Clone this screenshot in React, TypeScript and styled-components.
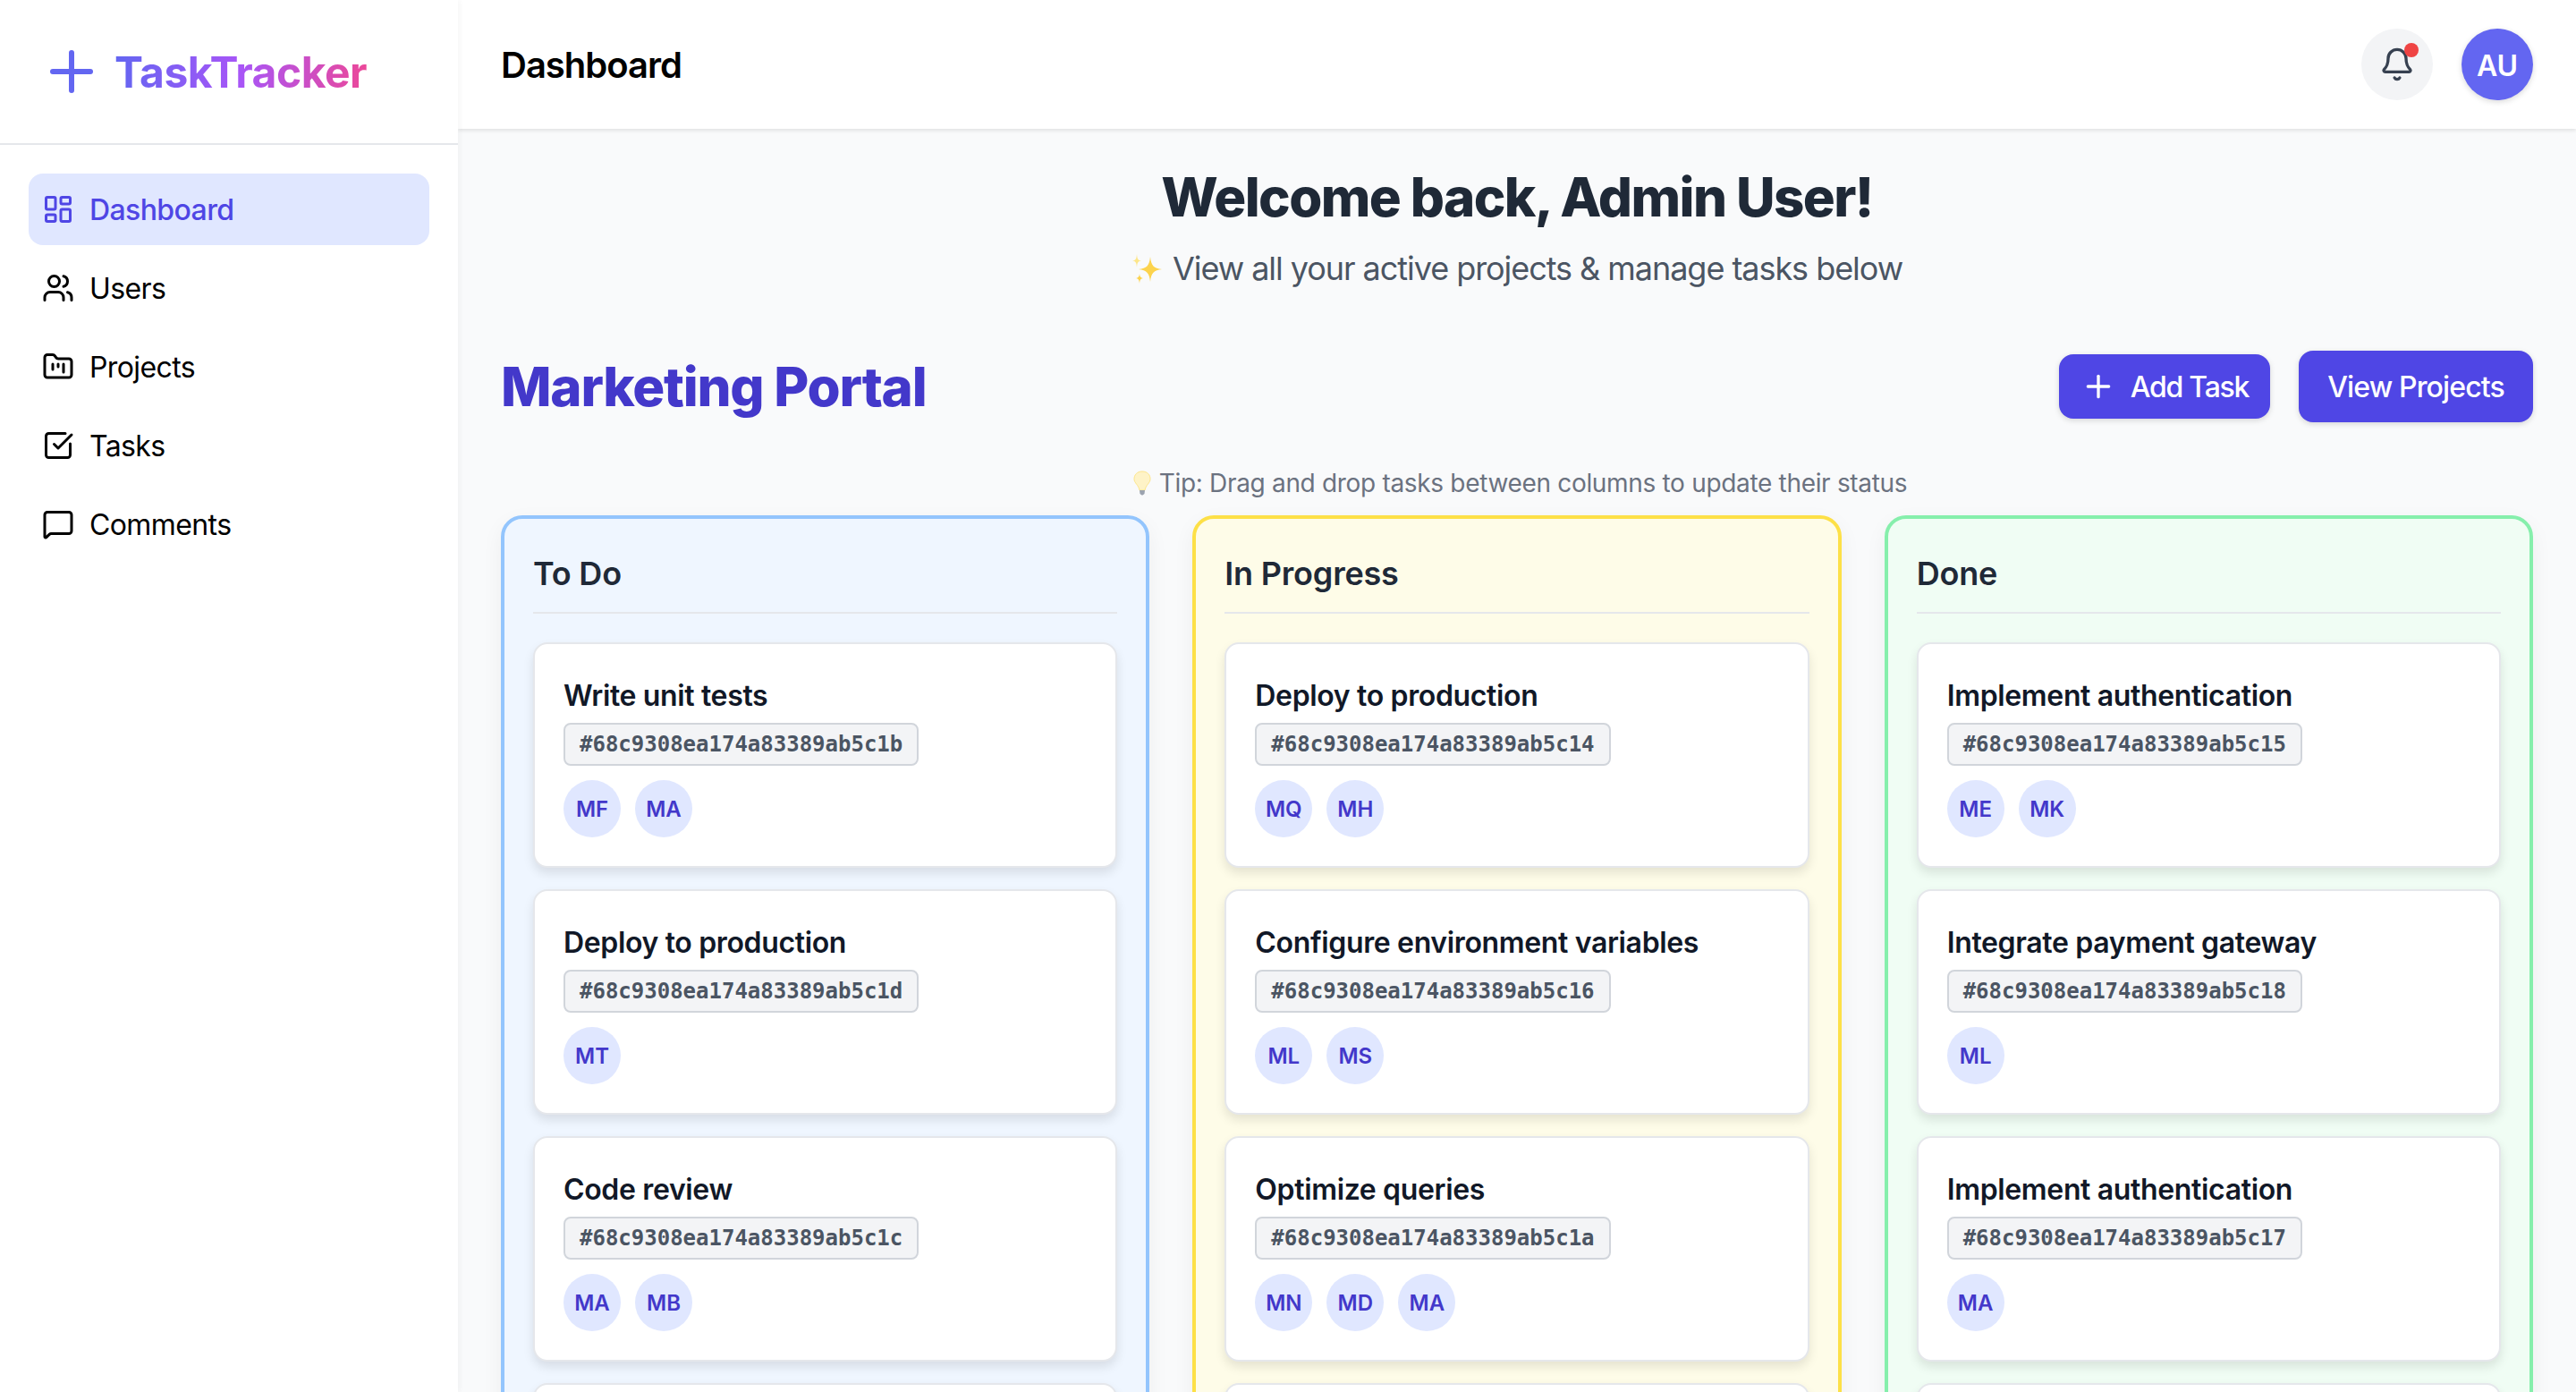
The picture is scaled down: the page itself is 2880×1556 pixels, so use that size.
import styled, { createGlobalStyle } from "styled-components";
import { Bell, CheckSquare, FolderKanban, LayoutDashboard, MessageSquare, Plus, Users } from "lucide-react";
import type { LucideIcon } from "lucide-react";

/*--------------------------
    Data
--------------------------*/
type NavEntry = { label: string; icon: LucideIcon; active?: boolean };
type Task = { title: string; id: string; people: string[] };
type Tone = "blue" | "yellow" | "green";
type Column = { title: string; tone: Tone; tasks: Task[] };

const NAV: NavEntry[] = [
    { label: "Dashboard", icon: LayoutDashboard, active: true },
    { label: "Users", icon: Users },
    { label: "Projects", icon: FolderKanban },
    { label: "Tasks", icon: CheckSquare },
    { label: "Comments", icon: MessageSquare },
];

const COLUMNS: Column[] = [
    {
        title: "To Do",
        tone: "blue",
        tasks: [
            { title: "Write unit tests", id: "#68c9308ea174a83389ab5c1b", people: ["MF", "MA"] },
            { title: "Deploy to production", id: "#68c9308ea174a83389ab5c1d", people: ["MT"] },
            { title: "Code review", id: "#68c9308ea174a83389ab5c1c", people: ["MA", "MB"] },
        ],
    },
    {
        title: "In Progress",
        tone: "yellow",
        tasks: [
            { title: "Deploy to production", id: "#68c9308ea174a83389ab5c14", people: ["MQ", "MH"] },
            { title: "Configure environment variables", id: "#68c9308ea174a83389ab5c16", people: ["ML", "MS"] },
            { title: "Optimize queries", id: "#68c9308ea174a83389ab5c1a", people: ["MN", "MD", "MA"] },
        ],
    },
    {
        title: "Done",
        tone: "green",
        tasks: [
            { title: "Implement authentication", id: "#68c9308ea174a83389ab5c15", people: ["ME", "MK"] },
            { title: "Integrate payment gateway", id: "#68c9308ea174a83389ab5c18", people: ["ML"] },
            { title: "Implement authentication", id: "#68c9308ea174a83389ab5c17", people: ["MA"] },
        ],
    },
];

const TONES: Record<Tone, { border: string; background: string }> = {
    blue: { border: "#93c5fd", background: "#eff6ff" },
    yellow: { border: "#fde047", background: "#fefce8" },
    green: { border: "#86efac", background: "#f0fdf4" },
};

/*--------------------------
    Styled
--------------------------*/
const GlobalReset = createGlobalStyle`
    * {
        box-sizing: border-box;
    }
    html,
    body {
        margin: 0;
        height: 100%;
        overflow: hidden;
    }
    body {
        font-family: Inter, "Liberation Sans", sans-serif;
        color: #000;
        background: #f9fafb;
    }
`;
const Shell = styled.div`
    display: flex;
    height: 100vh;
    overflow: hidden;
`;
const Sidebar = styled.aside`
    flex: 0 0 512px;
    position: relative;
    z-index: 2;
    background: #fff;
    box-shadow: 2px 0 6px rgba(0, 0, 0, 0.04);
`;
const Brand = styled.div`
    display: flex;
    align-items: center;
    gap: 12px;
    height: 162px;
    padding: 0 44px;
    border-bottom: 2px solid #e5e7eb;
    color: #6366f1;
`;
const BrandName = styled.span`
    padding-top: 2px;
    font-size: 48px;
    line-height: 72px;
    font-weight: 700;
    letter-spacing: -0.5px;
    background: linear-gradient(90deg, #6366f1, #a855f7, #ec4899);
    -webkit-background-clip: text;
    background-clip: text;
    color: transparent;
`;
const Nav = styled.nav`
    display: flex;
    flex-direction: column;
    gap: 8px;
    padding: 32px;
`;
const NavItem = styled.a<{ $active?: boolean }>`
    display: flex;
    align-items: center;
    gap: 17px;
    height: 80px;
    padding: 0 15px;
    border-radius: 16px;
    color: ${(p) => (p.$active ? "#4f46e5" : "#000")};
    background: ${(p) => (p.$active ? "#e0e7ff" : "transparent")};
    font-size: 32px;
    line-height: 48px;
    letter-spacing: -0.6px;
    font-weight: ${(p) => (p.$active ? 500 : 400)};
`;
const NavLabel = styled.span`
    padding-top: 2px;
`;
const Main = styled.div`
    flex: 1;
    min-width: 0;
    display: flex;
    flex-direction: column;
`;
const TopBar = styled.header`
    flex: 0 0 144px;
    display: flex;
    align-items: center;
    justify-content: space-between;
    padding: 0 48px;
    background: #fff;
    box-shadow: 0 2px 4px rgba(0, 0, 0, 0.1);
`;
const PageName = styled.h1`
    margin: 0;
    padding-top: 2px;
    font-size: 40px;
    line-height: 60px;
    font-weight: 600;
    letter-spacing: -1px;
    color: #000;
`;
const TopActions = styled.div`
    display: flex;
    gap: 32px;
`;
const RoundButton = styled.div`
    position: relative;
    display: flex;
    align-items: center;
    justify-content: center;
    width: 80px;
    height: 80px;
    border-radius: 50%;
    background: #f3f4f6;
    color: #374151;
`;
const Badge = styled.span`
    position: absolute;
    top: 16px;
    right: 16px;
    width: 16px;
    height: 16px;
    border-radius: 50%;
    background: #ef4444;
`;
const UserAvatar = styled.div`
    display: flex;
    align-items: center;
    justify-content: center;
    width: 80px;
    height: 80px;
    padding-top: 2px;
    border-radius: 50%;
    background: #6366f1;
    color: #fff;
    font-size: 32px;
    font-weight: 600;
    box-shadow: 0 2px 6px rgba(0, 0, 0, 0.15);
`;
const Content = styled.main`
    flex: 1;
    min-height: 0;
    overflow: hidden;
    padding: 40px 48px 0;
`;
const Welcome = styled.section`
    text-align: center;
`;
const WelcomeTitle = styled.h2`
    margin: 0;
    font-size: 60px;
    line-height: 72px;
    font-weight: 800;
    letter-spacing: -1.6px;
    color: #1f2937;
`;
const WelcomeText = styled.p`
    display: flex;
    align-items: center;
    justify-content: center;
    gap: 10px;
    margin: 16px 0 0;
    font-size: 36px;
    line-height: 56px;
    letter-spacing: -1.05px;
    color: #4b5563;
`;
const ProjectRow = styled.div`
    display: flex;
    align-items: center;
    justify-content: space-between;
    margin-top: 64px;
`;
const ProjectName = styled.h2`
    margin: 0;
    font-size: 60px;
    line-height: 80px;
    font-weight: 800;
    letter-spacing: -1.25px;
    color: #4338ca;
`;
const ProjectActions = styled.div`
    display: flex;
    align-items: center;
    gap: 32px;
`;
const ActionButton = styled.button<{ $compact?: boolean }>`
    display: flex;
    align-items: center;
    gap: 16px;
    height: ${(p) => (p.$compact ? "72px" : "80px")};
    padding: ${(p) => (p.$compact ? "0 24px" : "0 32px")};
    border: 0;
    border-radius: 16px;
    color: #fff;
    background: #4f46e5;
    font-family: inherit;
    font-size: 32px;
    letter-spacing: ${(p) => (p.$compact ? "-1.25px" : "-0.85px")};
    font-weight: 500;
    box-shadow: 0 2px 6px rgba(0, 0, 0, 0.15);
`;
const Tip = styled.p`
    display: flex;
    align-items: center;
    justify-content: center;
    gap: 8px;
    margin: 48px 0 0;
    font-size: 28px;
    line-height: 40px;
    letter-spacing: -0.32px;
    color: #6b7280;
`;
const Board = styled.div`
    display: grid;
    grid-template-columns: repeat(3, minmax(0, 1fr));
    gap: 48px;
    margin-top: 16px;
`;
const ColumnBox = styled.section<{ $tone: Tone }>`
    padding: 32px;
    border: 4px solid ${(p) => TONES[p.$tone].border};
    border-radius: 24px;
    background: ${(p) => TONES[p.$tone].background};
    box-shadow: 0 8px 24px rgba(0, 0, 0, 0.05);
`;
const ColumnTitle = styled.h3`
    height: 74px;
    margin: 0 0 32px;
    padding-top: 1px;
    border-bottom: 2px solid #e5e7eb;
    font-size: 36px;
    line-height: 56px;
    font-weight: 600;
    letter-spacing: -0.2px;
    color: #1f2937;
`;
const CardList = styled.div`
    display: flex;
    flex-direction: column;
    gap: 24px;
`;
const Card = styled.article`
    min-height: 252px;
    padding: 32px;
    border: 2px solid #e5e7eb;
    border-radius: 16px;
    background: #fff;
    box-shadow: 0 6px 12px rgba(0, 0, 0, 0.1);
`;
const CardTitle = styled.div`
    height: 48px;
    padding-top: 2px;
    font-size: 32px;
    line-height: 48px;
    font-weight: 600;
    letter-spacing: -0.35px;
    color: #111827;
`;
const TaskId = styled.code`
    display: inline-block;
    margin-top: 8px;
    height: 48px;
    padding: 0 16px;
    border: 2px solid #d1d5db;
    border-radius: 8px;
    background: #f3f4f6;
    font-family: "DejaVu Sans Mono", "Liberation Mono", monospace;
    font-size: 24px;
    line-height: 44px;
    font-weight: 700;
    color: #4b5563;
`;
const People = styled.div`
    display: flex;
    gap: 16px;
    margin-top: 16px;
`;
const Person = styled.span`
    display: flex;
    align-items: center;
    justify-content: center;
    width: 64px;
    height: 64px;
    border-radius: 50%;
    background: #e0e7ff;
    color: #4338ca;
    font-size: 24px;
    font-weight: 600;
`;

/*--------------------------
    Main
--------------------------*/
const Sparkles = () => (
    <svg width="36" height="36" viewBox="0 0 36 36" aria-label="sparkles">
        <path d="M21 5 C22 15 25 18 34 19 C25 20 22 23 21 33 C20 23 17 20 8 19 C17 18 20 15 21 5Z" fill="#fcd34d" />
        <path d="M6 2 C6.5 8 7.5 9 11 9.500 C7.500 10 6.500 11 6 17 C5.500 11 4.500 10 1 9.500 C4.500 9 5.500 8 6 2Z" fill="#fde68a" />
        <path d="M9 24 C9.400 27.500 10.300 28.400 13 29 C10.300 29.600 9.400 30.500 9 35 C8.600 30.500 7.700 29.600 5 29 C7.700 28.400 8.600 27.500 9 24Z" fill="#fcd34d" />
    </svg>
);

const Bulb = () => (
    <svg width="28" height="28" viewBox="-6 0 28 28" aria-label="light bulb">
        <path d="M11 1 C5 1 2 5 2 9.500 C2 14 7 16 8 22 L14 22 C15 16 20 14 20 9.500 C20 5 17 1 11 1Z" fill="#fef3c7" stroke="#fde68a" strokeWidth="1" />
        <path d="M8 22 L14 22 L13.500 26 L11.500 27.500 L10.500 27.500 L8.500 26Z" fill="#9ca3af" />
    </svg>
);

const App = () => {
    return (
        <Shell>
            <GlobalReset />
            <Sidebar>
                <Brand>
                    <Plus size={72} strokeWidth={2} />
                    <BrandName>TaskTracker</BrandName>
                </Brand>
                <Nav>
                    {NAV.map(({ label, icon: Icon, active }) => (
                        <NavItem key={label} $active={active}>
                            <Icon size={36} strokeWidth={2} />
                            <NavLabel>{label}</NavLabel>
                        </NavItem>
                    ))}
                </Nav>
            </Sidebar>
            <Main>
                <TopBar>
                    <PageName>Dashboard</PageName>
                    <TopActions>
                        <RoundButton>
                            <Bell size={40} strokeWidth={2} />
                            <Badge />
                        </RoundButton>
                        <UserAvatar>AU</UserAvatar>
                    </TopActions>
                </TopBar>
                <Content>
                    <Welcome>
                        <WelcomeTitle>Welcome back, Admin User!</WelcomeTitle>
                        <WelcomeText>
                            <Sparkles />
                            View all your active projects &amp; manage tasks below
                        </WelcomeText>
                    </Welcome>
                    <ProjectRow>
                        <ProjectName>Marketing Portal</ProjectName>
                        <ProjectActions>
                            <ActionButton $compact>
                                <Plus size={40} strokeWidth={2} />
                                Add Task
                            </ActionButton>
                            <ActionButton>View Projects</ActionButton>
                        </ProjectActions>
                    </ProjectRow>
                    <Tip>
                        <Bulb />
                        Tip: Drag and drop tasks between columns to update their status
                    </Tip>
                    <Board>
                        {COLUMNS.map((column) => (
                            <ColumnBox key={column.title} $tone={column.tone}>
                                <ColumnTitle>{column.title}</ColumnTitle>
                                <CardList>
                                    {column.tasks.map((task) => (
                                        <Card key={task.id}>
                                            <CardTitle>{task.title}</CardTitle>
                                            <TaskId>{task.id}</TaskId>
                                            <People>
                                                {task.people.map((person) => (
                                                    <Person key={person}>{person}</Person>
                                                ))}
                                            </People>
                                        </Card>
                                    ))}
                                    {/* the next card only peeks in at the bottom of the window */}
                                    <Card />
                                </CardList>
                            </ColumnBox>
                        ))}
                    </Board>
                </Content>
            </Main>
        </Shell>
    );
};

export default App;
